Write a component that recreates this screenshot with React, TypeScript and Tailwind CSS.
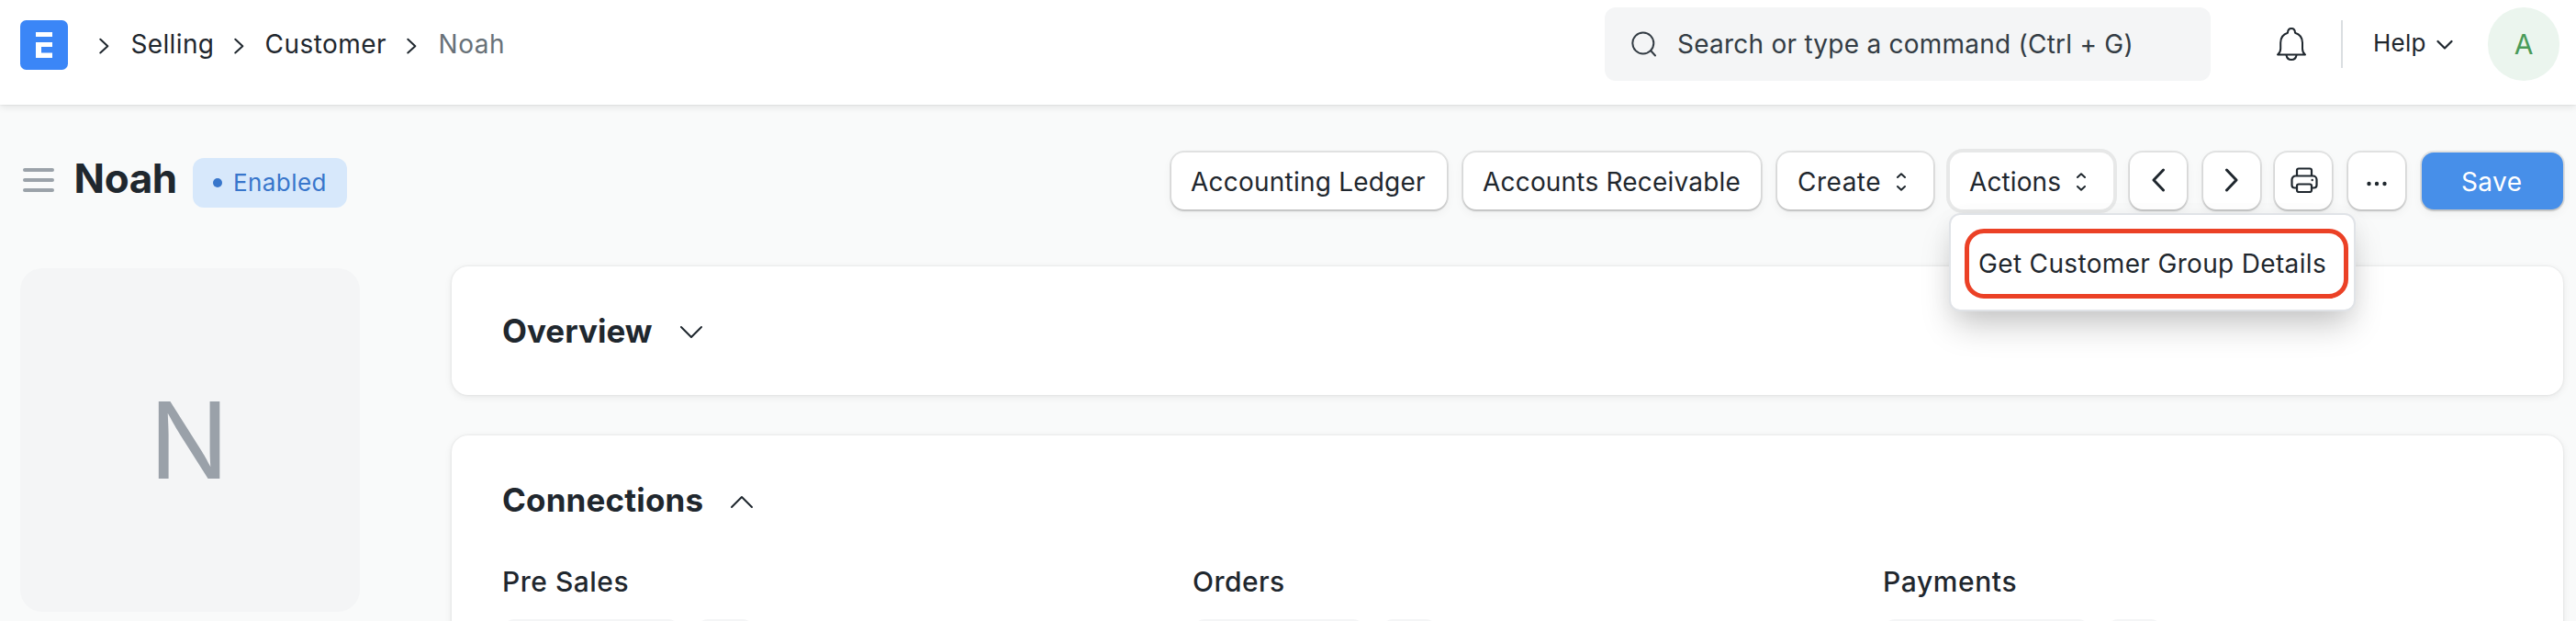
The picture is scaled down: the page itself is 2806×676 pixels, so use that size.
import type { ReactNode } from "react";

const buttonShadow = "shadow-[0_0_0_2px_rgba(0,0,0,0.09),0_2px_2px_0_rgba(0,0,0,0.12),0_4px_10px_2px_rgba(0,0,0,0.035)]";
const cardShadow = "shadow-[0_0_3px_rgba(0,0,0,0.09),0_2px_8px_rgba(0,0,0,0.08)]";

function Crumb() {
  return (
    <svg className="h-[18px] w-[11px] shrink-0" viewBox="0 0 11 18" fill="none" stroke="#1f272e" strokeWidth="2" strokeLinecap="round" strokeLinejoin="round">
      <path d="M1.300 1.800 9.300 9.300 1.300 16.500" />
    </svg>
  );
}

function Logo() {
  return (
    <svg className="mt-0.5 h-[54px] w-[52px] shrink-0" viewBox="0 0 52 54">
      <rect width="52" height="54" rx="6.500" fill="#3b86f7" />
      <path d="M17 13h18v5H17zM17 24h18v5H23v6.500H35V41H17z" fill="#fff" />
    </svg>
  );
}

function Bell() {
  return (
    <svg className="h-[38px] w-[34px] shrink-0" viewBox="0 0 34 38" fill="none" stroke="#1f272e" strokeWidth="2" strokeLinejoin="round" strokeLinecap="round">
      <path d="M2 30.500H32C30 29 29 26.500 29 24V17.500C29 12.500 26.500 8.500 21 6.800C21 3.800 19.300 2 17 2S13 3.800 13 6.800C7.500 8.500 5.200 12.500 5.200 17.500V24C5.200 26.500 4 29 2 30.500Z" />
      <path d="M11.500 31C12 34.500 14 36 17 36S22 34.500 22.500 31" />
    </svg>
  );
}

function Sorter() {
  return (
    <svg className="h-[20px] w-[12px] shrink-0" viewBox="0 0 12 20" fill="none" stroke="#1f272e" strokeWidth="2" strokeLinecap="round" strokeLinejoin="round">
      <path d="M2 5 6 1.300 10 5M2 15 6 18.700 10 15" />
    </svg>
  );
}

function IconButton({ children }: { children: ReactNode }) {
  return (
    <button className={`flex h-[62px] w-[62px] shrink-0 items-center justify-center rounded-[14px] bg-white ${buttonShadow}`}>
      {children}
    </button>
  );
}

function Group({ title, first, second, className }: { title: string; first: string; second: string; className: string }) {
  return (
    <div className="w-[752px] shrink-0">
      <h4 className={`text-[30px] leading-[40px] font-medium ${className}`}>{title}</h4>
      <div className="mt-[21px] ml-px flex gap-[19px]">
        <div className={`h-14 rounded-xl bg-[#f4f5f6] ${first}`} />
        <div className={`h-14 rounded-xl bg-[#f4f5f6] ${second}`} />
      </div>
    </div>
  );
}

export default function App() {
  return (
    <div className="flex h-[676px] w-[2806px] flex-col overflow-hidden bg-[#f9fafa] font-[Inter,sans-serif] text-[28px] leading-[36px] text-[#1f272e]">
      <header className="relative flex h-[114px] shrink-0 items-center bg-white pr-[18px] pb-[18px] pl-[22px] shadow-[0_0_2px_rgba(0,0,0,0.1),0_2px_8px_rgba(0,0,0,0.1)]">
        <Logo />
        <nav className="flex items-center whitespace-nowrap">
          <span className="mt-1 ml-[33.5px] flex"><Crumb /></span>
          <span className="ml-[24px] w-[112.500px] tracking-[0.35px]">Selling</span>
          <span className="mt-1 flex"><Crumb /></span>
          <span className="ml-[22.500px] w-[154.500px] tracking-[0.45px]">Customer</span>
          <span className="mt-1 flex"><Crumb /></span>
          <span className="ml-[23.500px] tracking-[0.54px] text-[#687178]">Noah</span>
        </nav>
        <div className="ml-auto flex h-20 w-[660px] items-center rounded-xl bg-[#f4f5f6] pl-[29px] text-[#333c44]">
          <svg className="h-[30px] w-[28px]" viewBox="0 0 28 30" fill="none" stroke="currentColor" strokeWidth="2" strokeLinecap="round">
            <circle cx="12.800" cy="14" r="11.500" />
            <path d="m21 22 5 5.500" />
          </svg>
          <span className="ml-[22px] tracking-[0.24px]">Search or type a command (Ctrl + G)</span>
        </div>
        <div className="ml-[71px] flex"><Bell /></div>
        <div className="ml-[37px] h-[52px] w-[2px] bg-[#dadee1]" />
        <div className="ml-[33px] flex w-[87px] items-center">
          <span className="-mt-[3px] w-[69px] text-[26px] tracking-[0.2px]">Help</span>
          <svg className="mt-0.5 h-[12px] w-[18px] shrink-0" viewBox="0 0 18 12" fill="none" stroke="#1f272e" strokeWidth="2.200" strokeLinecap="round" strokeLinejoin="round">
            <path d="m1.500 2 7.500 7.500L16.500 2" />
          </svg>
        </div>
        <div className="ml-[38px] flex h-20 w-[78px] items-center justify-center rounded-full bg-[#ebf5ee] text-[30px] text-[#4a9b59]">
          <span className="-mt-px">A</span>
        </div>
      </header>

      <section className="flex h-[114px] shrink-0 items-end pr-[14px] pl-[25px]">
        <div className="flex h-[62px] items-center">
          <div className="-mt-0.5 flex w-[34px] flex-col gap-[7px]">
            <div className="h-1 rounded-full bg-[#9ba2a9]" />
            <div className="h-1 rounded-full bg-[#9ba2a9]" />
            <div className="h-1 rounded-full bg-[#9ba2a9]" />
          </div>
          <h1 className="-mt-1.5 ml-[21.500px] w-[129.500px] text-[44px] leading-[52px] font-bold tracking-[-0.4px]">Noah</h1>
          <div className="mt-1 flex h-[54px] w-[168px] items-center rounded-xl bg-[#d7e8fb] pl-[22px] text-[26px] text-[#3876cb]">
            <span className="h-[10px] w-[10px] rounded-full bg-[#3876cb]" />
            <span className="ml-[12px] tracking-[0.42px]">Enabled</span>
          </div>
        </div>

        <div className="ml-auto flex gap-[18px] whitespace-nowrap">
          <button className={`h-[62px] w-[300px] rounded-[14px] bg-white pt-px pl-[21px] text-left tracking-[0.22px] ${buttonShadow}`}>Accounting Ledger</button>
          <button className={`h-[62px] w-[324px] rounded-[14px] bg-white pt-px pl-[21px] text-left tracking-[0.19px] ${buttonShadow}`}>Accounts Receivable</button>
          <button className={`flex h-[62px] w-[170px] items-center rounded-[14px] bg-white pt-px pl-[22px] ${buttonShadow}`}>
            <span className="w-[107px] text-left tracking-[0.5px]">Create</span>
            <Sorter />
          </button>
          <div className="relative">
            <button className="flex h-[62px] w-[178px] items-center rounded-[14px] bg-white pt-px pl-[21px] shadow-[0_0_0_4px_rgba(0,0,0,0.07)]">
              <span className="w-[116px] text-left tracking-[0.1px]">Actions</span>
              <Sorter />
            </button>
            <div className="absolute top-[66px] left-[-1px] z-10 h-[107px] w-[443px] rounded-xl border-2 border-[#e0e3e7] bg-white pt-[15px] pl-[15px] shadow-[0_20px_36px_-6px_rgba(0,0,0,0.22),0_4px_24px_rgba(0,0,0,0.04)]">
              <div className="flex h-[76px] w-[418px] items-center rounded-[21px] border-[5px] border-[#eb4126] pb-px pl-[10px] tracking-[0.34px]">
                Get Customer Group Details
              </div>
            </div>
          </div>
          <IconButton>
            <svg className="-mt-0.5 h-[26px] w-[16px]" viewBox="0 0 16 26" fill="none" stroke="#1f272e" strokeWidth="3" strokeLinecap="round" strokeLinejoin="round">
              <path d="M13.500 2 3 13l10.500 11" />
            </svg>
          </IconButton>
          <IconButton>
            <svg className="-mt-0.5 h-[26px] w-[16px]" viewBox="0 0 16 26" fill="none" stroke="#1f272e" strokeWidth="3" strokeLinecap="round" strokeLinejoin="round">
              <path d="m2.500 2 10.500 11L2.500 24" />
            </svg>
          </IconButton>
          <div className="-ml-0.5 flex">
            <IconButton>
              <svg className="-mt-0.5 ml-px h-[28px] w-[30px]" viewBox="0 0 30 28" fill="none" stroke="#1f272e" strokeWidth="2.200" strokeLinejoin="round">
                <path d="M7 9.500V3.500a2 2 0 0 1 2-2h12a2 2 0 0 1 2 2v6" />
                <path d="M7 22.500H4.500A3 3 0 0 1 1.500 19.500V13.500a4 4 0 0 1 4-4h19a4 4 0 0 1 4 4v6a3 3 0 0 1-3 3H23" />
                <rect x="7" y="18.500" width="16" height="8.500" rx="2" />
                <circle cx="23.700" cy="14" r="1.200" fill="#1f272e" stroke="none" />
              </svg>
            </IconButton>
          </div>
          <IconButton>
            <svg className="mt-1.5 h-[6px] w-[24px]" viewBox="0 0 24 6" fill="#1f272e">
              <circle cx="3.500" cy="3" r="2.200" />
              <circle cx="12" cy="3" r="2.200" />
              <circle cx="20.500" cy="3" r="2.200" />
            </svg>
          </IconButton>
          <button className={`h-[62px] w-[154px] rounded-[13px] bg-[#478fe9] pt-px pl-[43px] text-left tracking-[0.4px] text-white ${buttonShadow}`}>Save</button>
        </div>
      </section>

      <main className="flex grow pt-[62px] pr-[14px] pl-[22px]">
        <aside className="mt-0.5 flex h-[374px] w-[370px] shrink-0 items-center justify-center rounded-[24px] bg-[#f4f5f6] text-[115px] leading-none text-[#9aa1a9]">
          <span className="-ml-0.5">N</span>
        </aside>
        <div className="ml-[100px] flex w-[2300px] flex-col gap-11">
          <section className={`flex h-[140px] shrink-0 items-center rounded-[18px] bg-white pl-[55px] ${cardShadow}`}>
            <h2 className="-mt-px w-[193px] text-[35px] font-bold">Overview</h2>
            <svg className="mt-1 h-[16px] w-[26px]" viewBox="0 0 26 16" fill="none" stroke="#1f272e" strokeWidth="2" strokeLinecap="round" strokeLinejoin="round">
              <path d="m2 2 11 11L24 2" />
            </svg>
          </section>
          <section className={`h-[300px] shrink-0 rounded-[18px] bg-white pl-[55px] ${cardShadow}`}>
            <div className="flex h-[139px] items-center">
              <h2 className="w-[248px] text-[35px] font-bold tracking-[0.15px]">Connections</h2>
              <svg className="mt-1 h-[16px] w-[26px]" viewBox="0 0 26 16" fill="none" stroke="#1f272e" strokeWidth="2" strokeLinecap="round" strokeLinejoin="round">
                <path d="m2 14 11-11 11 11" />
              </svg>
            </div>
            <div className="flex">
              <Group title="Pre Sales" first="w-[192px]" second="w-[62px]" className="tracking-[0.5px]" />
              <Group title="Orders" first="w-[186px]" second="w-[60px]" className="tracking-[0.44px]" />
              <Group title="Payments" first="w-[224px]" second="w-[60px]" className="tracking-[0.6px]" />
            </div>
          </section>
        </div>
      </main>
    </div>
  );
}
